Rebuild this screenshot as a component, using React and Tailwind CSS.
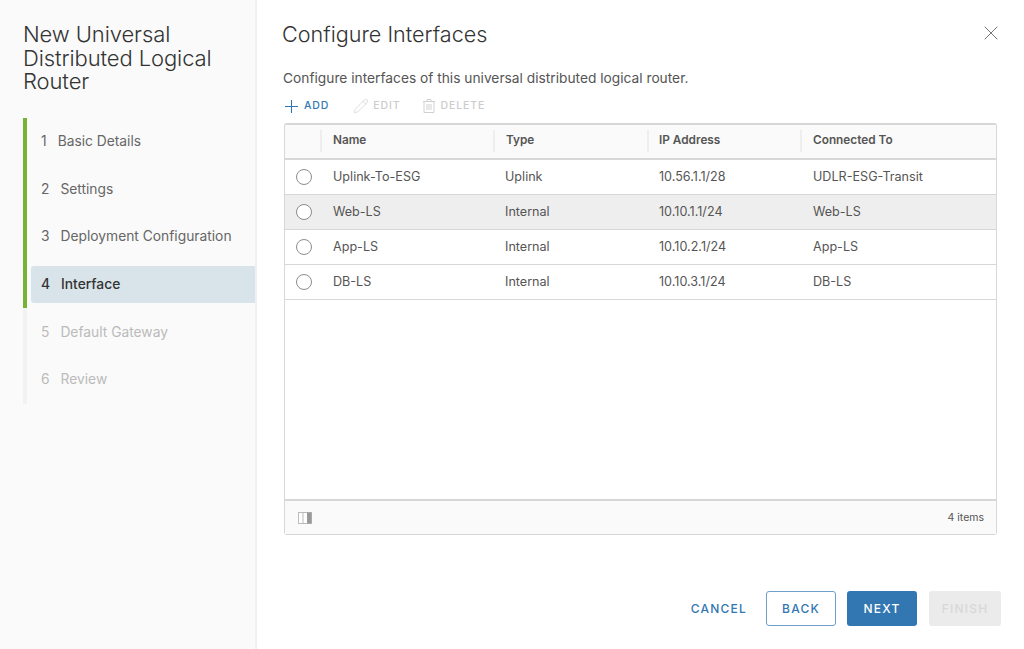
import { Pencil, X } from "lucide-react";

const steps = [
  { num: 1, label: "Basic Details", done: true },
  { num: 2, label: "Settings", done: true },
  { num: 3, label: "Deployment Configuration", done: true },
  { num: 4, label: "Interface", done: true, active: true },
  { num: 5, label: "Default Gateway" },
  { num: 6, label: "Review" },
];

const rows = [
  { name: "Uplink-To-ESG", type: "Uplink", ip: "10.56.1.1/28", to: "UDLR-ESG-Transit" },
  { name: "Web-LS", type: "Internal", ip: "10.10.1.1/24", to: "Web-LS", hover: true },
  { name: "App-LS", type: "Internal", ip: "10.10.2.1/24", to: "App-LS" },
  { name: "DB-LS", type: "Internal", ip: "10.10.3.1/24", to: "DB-LS" },
];

function Step({ step }) {
  let color = "text-[#666]";
  if (step.active) color = "text-[#333] bg-[#d9e4ea] font-medium";
  if (!step.done) color = "text-[#bbb]";
  return (
    <div className={`h-[47.7px] flex items-center ${step.done ? "border-l-4 border-[#74b334]" : "border-l-4 border-[#f2f2f2]"}`}>
      <div className={`h-[37px] w-full ml-1 pl-[10px] flex items-center gap-[11px] rounded-l-[3px] text-[13.8px] ${color}`}>
        <span>{step.num}</span>
        <span>{step.label}</span>
      </div>
    </div>
  );
}

function HeaderCell({ label, className }) {
  return (
    <div className={`flex items-center h-[22px] border-l-2 border-[#eee] text-[11.8px] font-semibold text-[#555] ${className}`}>
      {label}
    </div>
  );
}

function TrashIcon() {
  return (
    <svg width="12" height="14" viewBox="0 0 12 14" fill="none" stroke="currentColor" strokeWidth="0.9">
      <path d="M0 2.5h12M4 2.5V0.5h4v2M1 2.5v11h10v-11M4 5v6M6 5v6M8 5v6" />
    </svg>
  );
}

export default function App() {
  return (
    <div className="w-[1024px] h-[649px] flex bg-white overflow-hidden font-['Inter',sans-serif]">
      <div className="w-[257px] shrink-0 bg-[#fafafa] border-r-2 border-[#f0f0f0] pt-[23px]">
        <h1 className="ml-[23px] text-[22px] leading-[23.5px] font-light text-[#333] tracking-[-0.1px]">
          New Universal
          <br />
          Distributed Logical
          <br />
          Router
        </h1>
        <div className="mt-[24px] ml-[23px]">
          {steps.map((step) => (
            <Step key={step.num} step={step} />
          ))}
        </div>
      </div>

      <div className="flex-1 flex flex-col pl-[26px] pr-[23px]">
        <div className="flex items-start justify-between pt-[22px]">
          <h2 className="-ml-[1px] text-[21.6px] leading-[24px] font-light text-[#333]">Configure Interfaces</h2>
          <button className="-mt-[1px] -mr-[2px] text-[#666]">
            <X size={24} strokeWidth={0.9} />
          </button>
        </div>

        <p className="mt-[23px] text-[13.75px] leading-[18px] text-[#555]">
          Configure interfaces of this universal distributed logical router.
        </p>

        <div className="mt-[10px] ml-[2px] flex items-center h-[18px] text-[10.5px] font-medium tracking-[0.9px]">
          <span className="flex items-center gap-[6px] text-[#3277b2] mr-[24px]">
            <svg width="13" height="13" viewBox="0 0 13 13" fill="none" stroke="currentColor" strokeWidth="1.1">
              <path d="M6.5 0v13M0 6.5h13" />
            </svg>
            ADD
          </span>
          <span className="flex items-center gap-[4px] text-[#ccc] mr-[22px]">
            <Pencil size={16} strokeWidth={1} />
            EDIT
          </span>
          <span className="flex items-center gap-[6px] text-[#ccc]">
            <TrashIcon />
            DELETE
          </span>
        </div>

        <div className="mt-[8px] ml-[1px] w-[713px] h-[412px] flex flex-col border border-[#d7d7d7] border-t-2 rounded-[3px]">
          <div className="h-[35px] shrink-0 flex items-center pb-[2px] bg-[#fafafa] border-b-2 border-[#d7d7d7]">
            <div className="w-[37px] h-[22px] border-r-2 border-[#eee]" />
            <div className="w-[171px] pl-[11px] text-[11.8px] font-semibold text-[#555]">Name</div>
            <HeaderCell label="Type" className="w-[154px] pl-[11px]" />
            <HeaderCell label="IP Address" className="w-[153px] pl-[10px]" />
            <HeaderCell label="Connected To" className="flex-1 pl-[11px]" />
          </div>

          <div className="flex-1">
            {rows.map((row) => (
              <div
                key={row.name}
                className={`h-[35px] flex items-center border-b border-[#d7d7d7] text-[12.6px] text-[#555] ${row.hover ? "bg-[#eeeeee]" : "bg-white"}`}
              >
                <div className="w-[38px] pl-[11px]">
                  <div className="w-[16px] h-[16px] rounded-full border border-[#8c8c8c] bg-white" />
                </div>
                <div className="w-[172px] pl-[10px]">{row.name}</div>
                <div className="w-[154px] pl-[10px]">{row.type}</div>
                <div className="w-[154px] pl-[10px]">{row.ip}</div>
                <div className="flex-1 pl-[10px]">{row.to}</div>
              </div>
            ))}
          </div>

          <div className="h-[35px] shrink-0 flex items-center justify-between pl-[13px] pr-[12px] bg-[#fafafa] border-t-2 border-[#d7d7d7]">
            <svg width="14" height="12" viewBox="0 0 14 12">
              <rect x="0.5" y="0.5" width="13" height="11" fill="#fff" stroke="#bbb" />
              <rect x="4.5" y="0.5" width="1" height="11" fill="#bbb" />
              <rect x="9" y="0.5" width="4.5" height="11" fill="#999" />
            </svg>
            <span className="text-[10.5px] text-[#555]">4 items</span>
          </div>
        </div>

        <div className="mt-[56px] flex items-center justify-end text-[12px] font-medium tracking-[1.2px]">
          <button className="text-[#3277b2] mr-[19px]">CANCEL</button>
          <button className="w-[70px] h-[35px] rounded-[3px] border border-[#6ea0cb] text-[#3277b2] mr-[11px]">BACK</button>
          <button className="w-[70px] h-[35px] rounded-[3px] bg-[#3277b2] text-white mr-[12px]">NEXT</button>
          <button className="w-[72px] h-[35px] rounded-[3px] bg-[#ebebeb] text-[#d8d8d8]">FINISH</button>
        </div>
      </div>
    </div>
  );
}
